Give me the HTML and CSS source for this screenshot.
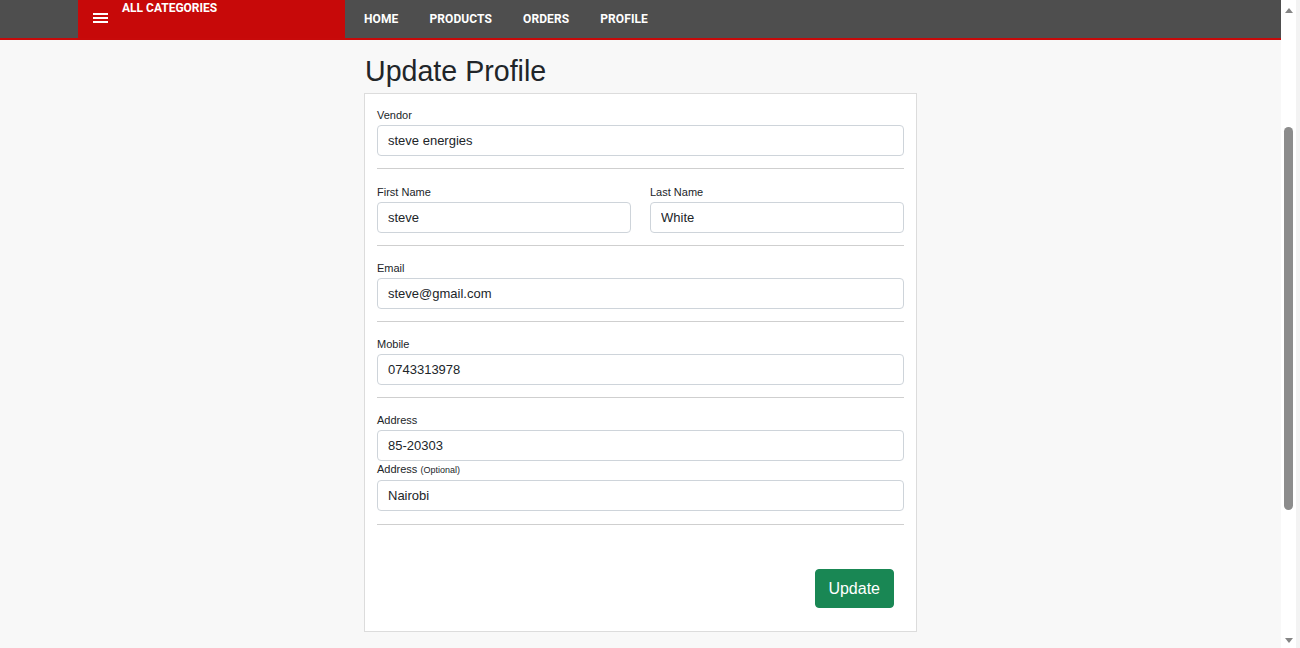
FILE: index.html
```html
<!DOCTYPE html>
<html lang="en">
<head>
<meta charset="utf-8">
<title>Update Profile</title>
<link rel="stylesheet" href="styles.css">
</head>
<body>
<div class="page">
  <header class="topbar">
    <div class="topbar-inner">
      <div class="categories">
        <svg class="burger" width="15" height="10" viewBox="0 0 15 10" aria-hidden="true">
          <rect x="0" y="0" width="15" height="2" fill="#fff"/>
          <rect x="0" y="4" width="15" height="2" fill="#fff"/>
          <rect x="0" y="8" width="15" height="2" fill="#fff"/>
        </svg>
        <span class="cat-label">ALL CATEGORIES</span>
      </div>
      <nav class="nav">
        <a class="nav-link" href="#">HOME</a>
        <a class="nav-link" href="#">PRODUCTS</a>
        <a class="nav-link" href="#">ORDERS</a>
        <a class="nav-link" href="#">PROFILE</a>
      </nav>
    </div>
  </header>

  <main class="container">
    <h1 class="title">Update Profile</h1>
    <form class="card">
      <div class="group">
        <label class="label">Vendor</label>
        <input class="input" type="text" value="steve energies">
      </div>
      <hr class="rule">
      <div class="group cols">
        <div>
          <label class="label">First Name</label>
          <input class="input" type="text" value="steve">
        </div>
        <div>
          <label class="label">Last Name</label>
          <input class="input" type="text" value="White">
        </div>
      </div>
      <hr class="rule">
      <div class="group">
        <label class="label">Email</label>
        <input class="input" type="text" value="steve@gmail.com">
      </div>
      <hr class="rule">
      <div class="group">
        <label class="label">Mobile</label>
        <input class="input" type="text" value="0743313978">
      </div>
      <hr class="rule">
      <div class="group">
        <label class="label">Address</label>
        <input class="input" type="text" value="85-20303">
        <label class="label">Address <small class="opt">(Optional)</small></label>
        <input class="input" type="text" value="Nairobi">
      </div>
      <hr class="rule rule-last">
      <div class="actions">
        <button class="btn" type="button">Update</button>
      </div>
    </form>
  </main>
</div>
<div class="scrollbar" aria-hidden="true">
  <div class="arrow arrow-up"></div>
  <div class="track"><div class="thumb"></div></div>
  <div class="arrow arrow-down"></div>
</div>
</body>
</html>
```

FILE: styles.css
```css
html, body {
  margin: 0;
  padding: 0;
  height: 648px;
  overflow: hidden;
}
body {
  display: flex;
  background: #f8f8f8;
  font-family: "Liberation Sans", Arial, sans-serif;
  color: #212529;
}
.page {
  width: 1281px;
  flex: none;
  height: 648px;
  overflow: hidden;
}
.topbar {
  background: #4e4e4e;
  height: 38px;
  border-bottom: 2px solid #c80a0a;
}
.topbar-inner {
  display: flex;
  height: 38px;
  padding-left: 78px;
}
.categories {
  width: 267px;
  background: #c70909;
  display: flex;
  align-items: flex-start;
  box-sizing: border-box;
  padding-left: 15px;
}
.burger {
  display: block;
  margin-top: 13px;
}
.cat-label {
  font-family: Roboto, "Liberation Sans", sans-serif;
  font-weight: 700;
  font-size: 12px;
  line-height: 14px;
  color: #fff;
  margin-left: 14px;
  margin-top: 1px;
}
.nav {
  display: flex;
  align-items: center;
  gap: 31px;
  padding-left: 19px;
}
.nav-link {
  font-family: Roboto, "Liberation Sans", sans-serif;
  font-weight: 700;
  font-size: 12px;
  color: #fff;
  text-decoration: none;
  line-height: 14px;
  letter-spacing: 0.1px;
}
.container {
  width: 553px;
  margin: 0 auto;
}
.title {
  font-size: 28.6px;
  font-weight: 400;
  line-height: 34px;
  margin: 14px 0 5px 1px;
  color: #212529;
}
.card {
  display: block;
  background: #fff;
  border: 1px solid #dcdcdc;
  padding: 13px 12px 23px;
  margin: 0;
}
.group.cols {
  display: grid;
  grid-template-columns: 254px 254px;
  column-gap: 19px;
  padding-top: 1px;
}
.label {
  display: block;
  font-size: 11px;
  line-height: 16px;
  margin-bottom: 2px;
}
.opt {
  font-size: 9px;
}
.input {
  display: block;
  box-sizing: border-box;
  width: 100%;
  height: 31px;
  border: 1px solid #ced4da;
  border-radius: 4px;
  padding: 0 10px;
  font-family: "Liberation Sans", Arial, sans-serif;
  font-size: 13px;
  color: #212529;
  background: #fff;
  margin: 0;
}
.rule {
  border: 0;
  border-top: 1px solid #cfcfcf;
  height: 0;
  margin: 12px 0 14px;
}
.rule-last {
  margin: 13px 0 0;
}
.actions {
  display: flex;
  justify-content: flex-end;
  padding-top: 44px;
  padding-right: 10px;
}
.btn {
  background: #198754;
  color: #fff;
  border: 1px solid #198754;
  border-radius: 4px;
  font-family: "Liberation Sans", Arial, sans-serif;
  font-size: 16px;
  line-height: 23px;
  padding: 7px 13px 7px 12px;
  cursor: pointer;
}
.scrollbar {
  width: 19px;
  flex: none;
  height: 648px;
  background: #fff;
  display: flex;
  flex-direction: column;
  align-items: center;
  box-shadow: inset -4px 0 0 #f3f3f3;
  box-sizing: border-box;
  padding-right: 4px;
}
.arrow {
  width: 0;
  height: 0;
  border-left: 4.5px solid transparent;
  border-right: 4.5px solid transparent;
}
.arrow-up {
  border-bottom: 5px solid #858585;
  margin-top: 8px;
}
.arrow-down {
  border-top: 5px solid #858585;
  margin-bottom: 5px;
}
.track {
  flex: 1;
  width: 100%;
  display: flex;
  justify-content: center;
}
.thumb {
  width: 9px;
  height: 383px;
  margin-top: 114px;
  background: #8c8c8c;
  border-radius: 5px;
}
```
